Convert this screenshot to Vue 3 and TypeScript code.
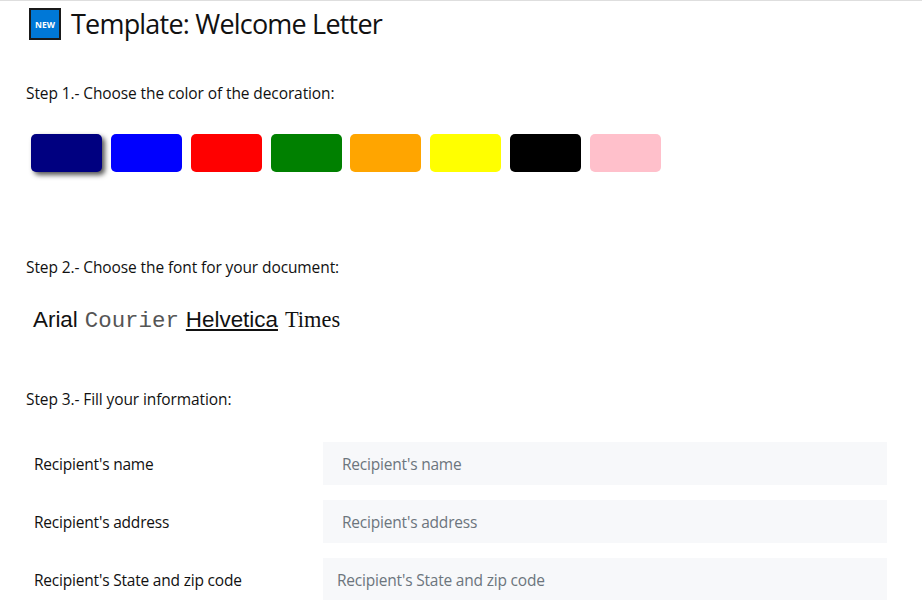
<script setup lang="ts">
const colors: string[] = ['navy', 'blue', 'red', 'green', 'orange', 'yellow', 'black', 'pink']
const rows = [
  { label: "Recipient's name", cls: '' },
  { label: "Recipient's address", cls: '' },
  { label: "Recipient's State and zip code", cls: 'tight' },
]
</script>

<template>
  <div class="page">
    <header class="head">
      <svg class="badge" width="32" height="32" viewBox="0 0 32 32">
        <rect x="1" y="1" width="30" height="30" fill="#0078d7" stroke="#1a1a1a" stroke-width="2" />
        <text x="16" y="19.5" text-anchor="middle" class="badge-text">NEW</text>
      </svg>
      <h1 class="title">Template: Welcome Letter</h1>
    </header>

    <p class="step step1">Step 1.- Choose the color of the decoration:</p>
    <div class="swatches">
      <button
        v-for="(c, i) in colors"
        :key="c"
        class="swatch"
        :class="{ selected: i === 0 }"
        :style="{ backgroundColor: c }"
      ></button>
    </div>

    <p class="step step2">Step 2.- Choose the font for your document:</p>
    <div class="fonts">
      <span class="arial">Arial</span>
      <span class="courier">Courier</span>
      <span class="helv">Helvetica</span>
      <span class="times">Times</span>
    </div>

    <p class="step step3">Step 3.- Fill your information:</p>
    <div class="form">
      <div v-for="r in rows" :key="r.label" class="row">
        <label class="label">{{ r.label }}</label>
        <input class="field" :class="r.cls" :placeholder="r.label" />
      </div>
    </div>
  </div>
</template>

<style>
html, body { margin: 0; background: #fff; overflow: hidden; }
</style>

<style scoped>
.page {
  height: 600px;
  box-sizing: border-box;
  border-top: 1px solid #dedede;
  font-family: "Open Sans", "Noto Sans", sans-serif;
  color: #111;
  overflow: hidden;
}
.head {
  display: flex;
  align-items: center;
  gap: 10px;
  padding: 7px 0 0 29px;
  height: 32px;
}
.badge { flex: none; }
.badge-text {
  font: 700 8.5px "Open Sans", sans-serif;
  fill: #fff;
}
.title {
  margin: 0;
  font-size: 27px;
  font-weight: 400;
  line-height: 32px;
  letter-spacing: -0.8px;
}
.step {
  margin: 0;
  padding-left: 26px;
  font-size: 15.5px;
  line-height: 22px;
  letter-spacing: -0.1px;
}
.step1 { margin-top: 42px; }
.swatches {
  display: flex;
  gap: 8.85px;
  padding-left: 31px;
  margin-top: 30px;
}
.swatch {
  width: 71px;
  height: 38px;
  padding: 0;
  border: 0;
  border-radius: 5px;
}
.selected { box-shadow: 3px 3px 5px #555; }
.step2 { margin-top: 84px; }
.fonts {
  display: flex;
  align-items: baseline;
  gap: 7px;
  padding-left: 33px;
  margin-top: 29px;
  font-size: 22.4px;
  line-height: 26px;
}
.arial, .helv { font-family: "Liberation Sans", sans-serif; }
.courier { font-family: "Liberation Mono", monospace; color: #555; }
.times { font-family: "Liberation Serif", serif; }
.helv { text-decoration: underline; }
.step3 { margin-top: 54px; }
.form {
  display: flex;
  flex-direction: column;
  gap: 15px;
  margin-top: 32px;
  padding: 0 35px 0 34px;
}
.row {
  display: grid;
  grid-template-columns: 289px 1fr;
  align-items: center;
}
.label { font-size: 15.5px; letter-spacing: -0.2px; }
.field {
  height: 43px;
  box-sizing: border-box;
  border: 0;
  background: #f7f8fa;
  padding: 0 19px;
  font: 15.5px "Open Sans", sans-serif;
  letter-spacing: -0.2px;
  outline: none;
}
.field.tight { padding-left: 14px; }
.field::placeholder { color: #6c757d; opacity: 1; }
</style>
